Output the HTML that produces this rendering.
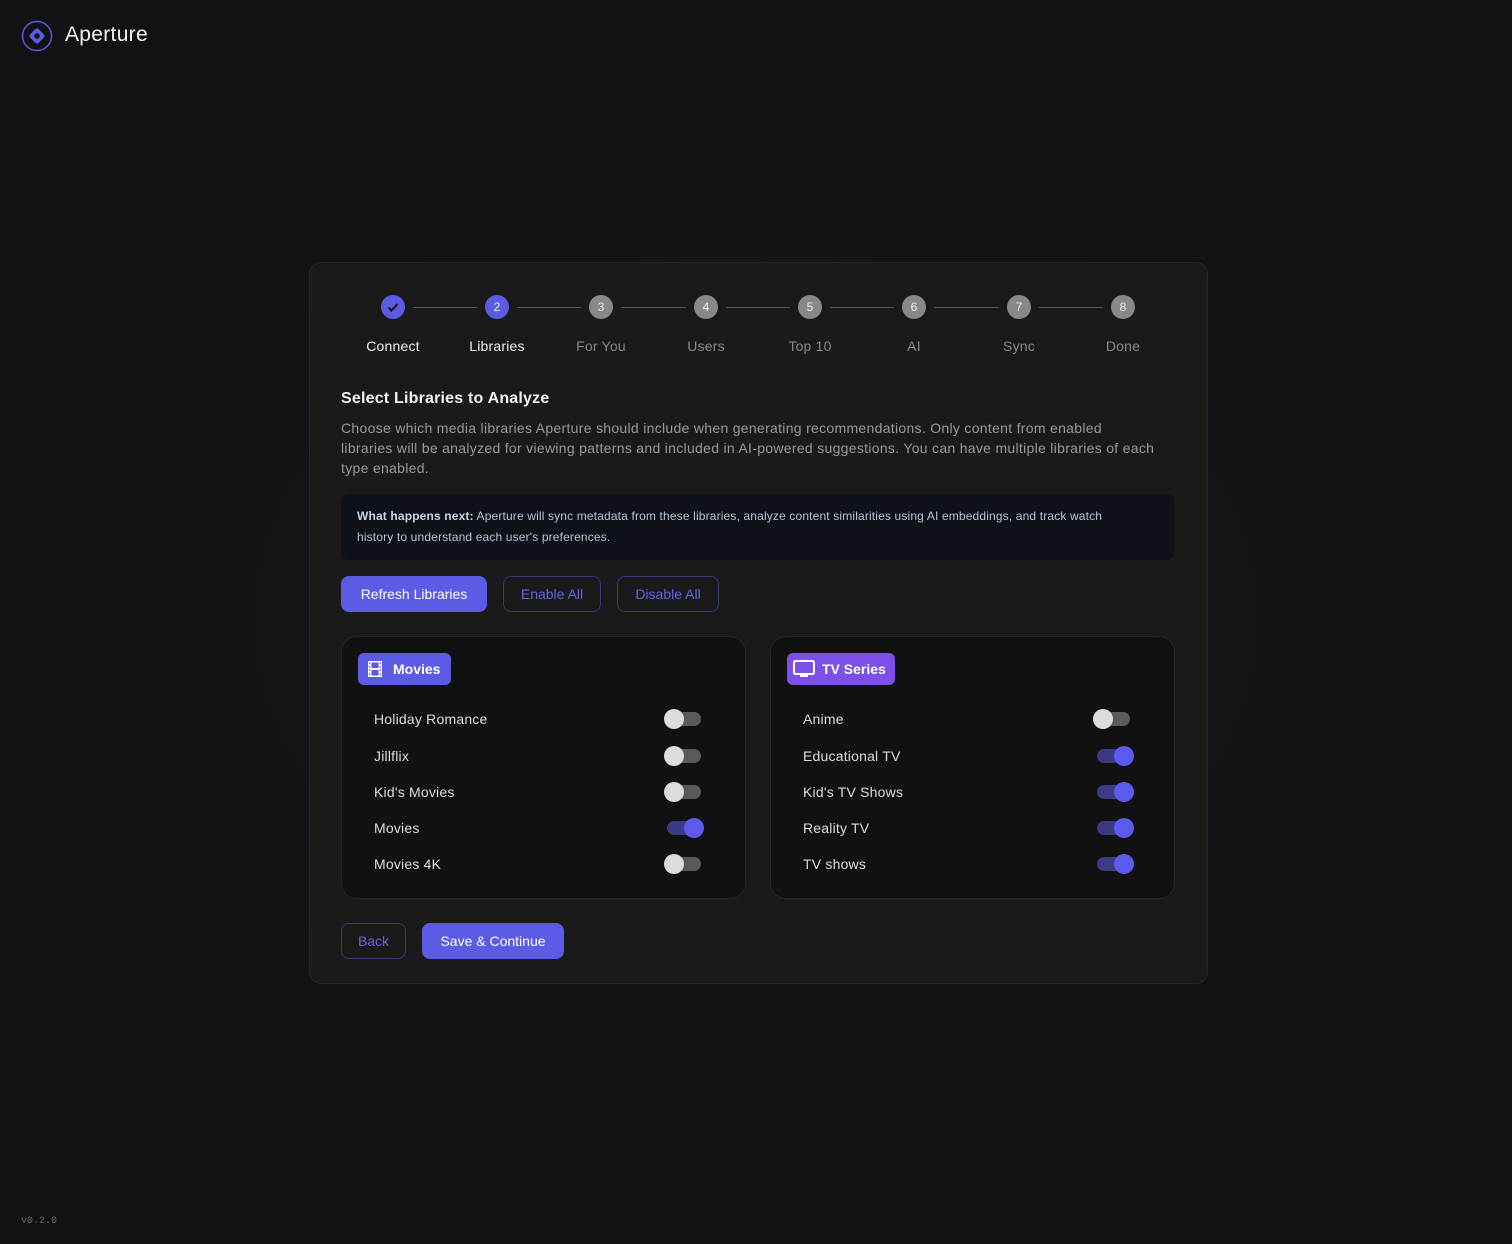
<!DOCTYPE html>
<html><head><meta charset="utf-8"><style>
*{box-sizing:border-box;margin:0;padding:0}
body{width:1512px;height:1244px;overflow:hidden;font-family:"Liberation Sans",sans-serif;color:#e6e6e6;
background:radial-gradient(ellipse 700px 500px at 756px 620px,#191a26 0%,#141419 60%,#121214 100%);position:relative}
.abs{position:absolute}
.card{left:309px;top:262px;width:899px;height:722px;background:#1a1a1a;border:1px solid #272727;border-radius:12px}
.circ{width:24px;height:24px;border-radius:50%;background:#888;color:#eee;font-size:12px;text-align:center;line-height:24px;transform:translateX(-12px)}
.line{height:1px;background:#555;top:307px}
.lbl{top:338px;font-size:14px;color:#888;width:120px;text-align:center;transform:translateX(-60px);letter-spacing:0.2px}
.btn{height:36px;border-radius:8px;font-size:14px;line-height:34px;text-align:center}
.fill{background:#5b5be6;color:#fff;border:1px solid #5b5be6}
.out{border:1px solid #3a3a7a;color:#6464e0}
.panel{top:636px;width:405px;height:263px;background:#111;border:1px solid #262626;border-radius:16px}
.badge{left:16px;top:16px;height:32px;border-radius:6px;color:#fff;font-size:14px;font-weight:bold;line-height:32px;padding-left:35px}
.row{left:32px;font-size:14px;color:#ddd;letter-spacing:0.2px}
.tg{width:36px;height:14px;border-radius:7px;background:#5a5a5a}
.tg i{position:absolute;width:20px;height:20px;border-radius:50%;background:#ddd;top:-3px;left:-1px}
.tg.on{background:#3a3a85}
.tg.on i{background:#5b5bf0;left:17px}
</style></head><body>
<svg class="abs" style="left:21px;top:20px" width="32" height="32" viewBox="0 0 32 32"><circle cx="16" cy="16" r="14.5" fill="none" stroke="#5b5be6" stroke-width="1.5"/><rect x="10" y="10" width="12" height="12" rx="2.5" transform="rotate(45 16 16)" fill="#5b5be6"/><circle cx="16" cy="16" r="2.8" fill="#121214"/></svg>
<div class="abs" style="left:65px;top:23px;font-size:21px;color:#f2f2f2;letter-spacing:0.3px">Aperture</div>

<div class="abs card"></div>
<div class="abs line" style="left:413px;width:64px"></div>
<div class="abs line" style="left:517px;width:64px"></div>
<div class="abs line" style="left:621px;width:65px"></div>
<div class="abs line" style="left:726px;width:64px"></div>
<div class="abs line" style="left:830px;width:64px"></div>
<div class="abs line" style="left:934px;width:65px"></div>
<div class="abs line" style="left:1039px;width:64px"></div>
<div class="abs circ" style="left:393px;top:295px;background:#5b5be6"><svg width="24" height="24" viewBox="0 0 24 24"><path d="M7.5 12.5l3 3 6-6.5" fill="none" stroke="#1a1a1a" stroke-width="2.2"/></svg></div>
<div class="abs circ" style="left:497px;top:295px;background:#5b5be6">2</div>
<div class="abs circ" style="left:601px;top:295px">3</div>
<div class="abs circ" style="left:706px;top:295px">4</div>
<div class="abs circ" style="left:810px;top:295px">5</div>
<div class="abs circ" style="left:914px;top:295px">6</div>
<div class="abs circ" style="left:1019px;top:295px">7</div>
<div class="abs circ" style="left:1123px;top:295px">8</div>
<div class="abs lbl" style="left:393px;color:#eee">Connect</div>
<div class="abs lbl" style="left:497px;color:#eee">Libraries</div>
<div class="abs lbl" style="left:601px">For You</div>
<div class="abs lbl" style="left:706px">Users</div>
<div class="abs lbl" style="left:810px">Top 10</div>
<div class="abs lbl" style="left:914px">AI</div>
<div class="abs lbl" style="left:1019px">Sync</div>
<div class="abs lbl" style="left:1123px">Done</div>

<div class="abs" style="left:341px;top:390px;font-size:16px;font-weight:bold;color:#f2f2f2;letter-spacing:0.2px">Select Libraries to Analyze</div>
<div class="abs" style="left:341px;top:418px;width:850px;font-size:14px;line-height:20px;color:#999;letter-spacing:0.3px;white-space:nowrap">Choose which media libraries Aperture should include when generating recommendations. Only content from enabled<br>libraries will be analyzed for viewing patterns and included in AI-powered suggestions. You can have multiple libraries of each<br>type enabled.</div>
<div class="abs" style="left:341px;top:494px;width:834px;height:66px;background:#0e1118;border-radius:8px;padding:12px 16px;font-size:12px;line-height:21px;color:#b8c4dc;white-space:nowrap;letter-spacing:0.15px"><b style="color:#c8d4ec">What happens next:</b> Aperture will sync metadata from these libraries, analyze content similarities using AI embeddings, and track watch<br>history to understand each user's preferences.</div>

<div class="abs btn fill" style="left:341px;top:576px;width:146px">Refresh Libraries</div>
<div class="abs btn out" style="left:503px;top:576px;width:98px">Enable All</div>
<div class="abs btn out" style="left:617px;top:576px;width:102px">Disable All</div>

<div class="abs panel" style="left:341px">
 <div class="abs badge" style="width:93px;background:#5b5be6"><svg class="abs" style="left:9px;top:8px" width="16" height="16" viewBox="0 0 16 16"><rect x="1" y="0" width="14" height="16" fill="#fff"/><rect x="4.5" y="1.5" width="7" height="5.5" fill="#5b5be6"/><rect x="4.5" y="9" width="7" height="5.5" fill="#5b5be6"/><g fill="#5b5be6"><rect x="2" y="1.5" width="1.3" height="1.5"/><rect x="2" y="5" width="1.3" height="1.5"/><rect x="2" y="8.5" width="1.3" height="1.5"/><rect x="2" y="12.5" width="1.3" height="1.5"/><rect x="12.7" y="1.5" width="1.3" height="1.5"/><rect x="12.7" y="5" width="1.3" height="1.5"/><rect x="12.7" y="8.5" width="1.3" height="1.5"/><rect x="12.7" y="12.5" width="1.3" height="1.5"/></g></svg>Movies</div>
 <div class="abs row" style="top:74px">Holiday Romance</div><div class="abs tg" style="left:323px;top:75px"><i></i></div>
 <div class="abs row" style="top:111px">Jillflix</div><div class="abs tg" style="left:323px;top:112px"><i></i></div>
 <div class="abs row" style="top:147px">Kid's Movies</div><div class="abs tg" style="left:323px;top:148px"><i></i></div>
 <div class="abs row" style="top:183px">Movies</div><div class="abs tg on" style="left:325px;top:184px"><i></i></div>
 <div class="abs row" style="top:219px">Movies 4K</div><div class="abs tg" style="left:323px;top:220px"><i></i></div>
</div>
<div class="abs panel" style="left:770px">
 <div class="abs badge" style="width:108px;background:#7c4fe8"><svg class="abs" style="left:6px;top:7px" width="22" height="18" viewBox="0 0 22 18"><rect x="1" y="1" width="20" height="13" rx="1.5" fill="none" stroke="#fff" stroke-width="2"/><rect x="7" y="15" width="8" height="2" fill="#fff"/></svg>TV Series</div>
 <div class="abs row" style="top:74px">Anime</div><div class="abs tg" style="left:323px;top:75px"><i></i></div>
 <div class="abs row" style="top:111px">Educational TV</div><div class="abs tg on" style="left:326px;top:112px"><i></i></div>
 <div class="abs row" style="top:147px">Kid's TV Shows</div><div class="abs tg on" style="left:326px;top:148px"><i></i></div>
 <div class="abs row" style="top:183px">Reality TV</div><div class="abs tg on" style="left:326px;top:184px"><i></i></div>
 <div class="abs row" style="top:219px">TV shows</div><div class="abs tg on" style="left:326px;top:220px"><i></i></div>
</div>

<div class="abs btn out" style="left:341px;top:923px;width:65px">Back</div>
<div class="abs btn fill" style="left:422px;top:923px;width:142px">Save &amp; Continue</div>

<div class="abs" style="left:21px;top:1216px;font-family:'Liberation Mono',monospace;font-size:10px;color:#666">v0.2.0</div>
</body></html>
